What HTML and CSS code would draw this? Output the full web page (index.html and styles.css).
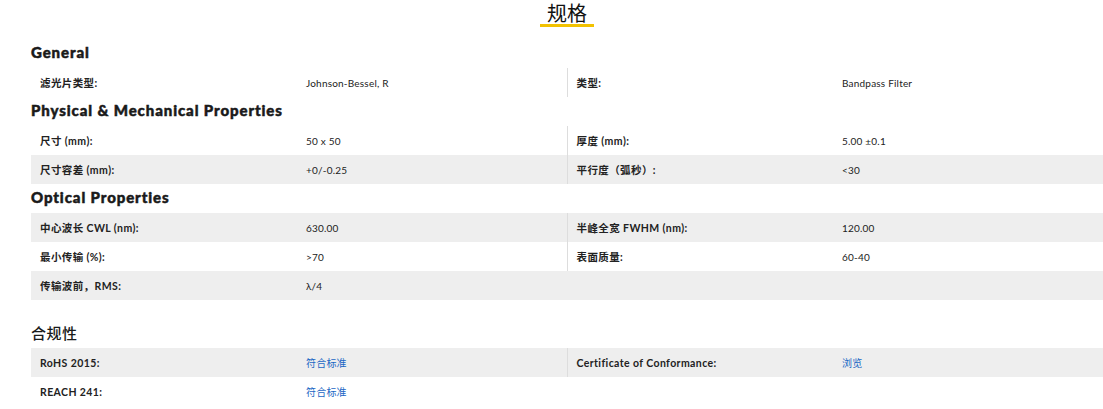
FILE: index.html
```html
<!DOCTYPE html>
<html lang="zh">
<head>
<meta charset="utf-8">
<title>规格</title>
<link rel="stylesheet" href="styles.css">
</head>
<body>
<div class="specs">
  <div class="title-wrap"><h2 class="title">规格</h2></div>

  <h3 class="group first">General</h3>
  <table class="grid">
    <colgroup><col class="c-lbl"><col class="c-val"><col class="c-lbl"><col class="c-val"></colgroup>
    <tr class="odd"><td class="lbl">滤光片类型:</td><td class="val">Johnson-Bessel, R</td><td class="lbl sep">类型:</td><td class="val">Bandpass Filter</td></tr>
  </table>

  <h3 class="group">Physical &amp; Mechanical Properties</h3>
  <table class="grid">
    <colgroup><col class="c-lbl"><col class="c-val"><col class="c-lbl"><col class="c-val"></colgroup>
    <tr class="odd"><td class="lbl">尺寸 (mm):</td><td class="val">50 x 50</td><td class="lbl sep">厚度 (mm):</td><td class="val">5.00 ±0.1</td></tr>
    <tr class="even"><td class="lbl">尺寸容差 (mm):</td><td class="val">+0/-0.25</td><td class="lbl sep">平行度（弧秒）:</td><td class="val">&lt;30</td></tr>
  </table>

  <h3 class="group">Optical Properties</h3>
  <table class="grid">
    <colgroup><col class="c-lbl"><col class="c-val"><col class="c-lbl"><col class="c-val"></colgroup>
    <tr class="even"><td class="lbl">中心波长 CWL (nm):</td><td class="val">630.00</td><td class="lbl sep">半峰全宽 FWHM (nm):</td><td class="val">120.00</td></tr>
    <tr class="odd"><td class="lbl">最小传输 (%):</td><td class="val">&gt;70</td><td class="lbl sep">表面质量:</td><td class="val">60-40</td></tr>
    <tr class="even"><td class="lbl">传输波前，RMS:</td><td class="val">λ/4</td><td></td><td></td></tr>
  </table>

  <h3 class="group cjk">合规性</h3>
  <table class="grid">
    <colgroup><col class="c-lbl"><col class="c-val"><col class="c-lbl"><col class="c-val"></colgroup>
    <tr class="even"><td class="lbl">RoHS 2015:</td><td class="val"><a class="link" href="#">符合标准</a></td><td class="lbl sep">Certificate of Conformance:</td><td class="val"><a class="link" href="#">浏览</a></td></tr>
    <tr class="odd"><td class="lbl">REACH 241:</td><td class="val"><a class="link" href="#">符合标准</a></td><td></td><td></td></tr>
  </table>
</div>
</body>
</html>
```

FILE: styles.css
```css
html, body {
  margin: 0;
  padding: 0;
  background: #ffffff;
}
body {
  font-family: "Lato", "Noto Sans CJK SC", sans-serif;
  color: #222222;
  overflow: hidden;
}
.specs {
  margin-left: 31px;
  width: 1072px;
}
.title-wrap {
  display: flex;
  justify-content: center;
  padding-top: 1px;
}
.title {
  margin: 0;
  font-family: "Noto Sans CJK SC", sans-serif;
  font-weight: 400;
  font-size: 20px;
  line-height: 23px;
  height: 23px;
  color: #111111;
  border-bottom: 3px solid #f2c200;
  padding: 0 7px;
}
.group {
  margin: 0;
  height: 29px;
  box-sizing: border-box;
  padding-top: 1px;
  line-height: 24px;
  font-size: 15px;
  font-weight: 900;
  color: #1a1a1a;
  letter-spacing: 0.9px;
  -webkit-text-stroke: 0.5px #1a1a1a;
}
.group.first {
  height: 41px;
  padding-top: 13px;
}
.group.cjk {
  margin-top: 19px;
  padding-top: 2px;
  font-family: "Noto Sans CJK SC", sans-serif;
  font-weight: 500;
  font-size: 15px;
  letter-spacing: 0.5px;
  -webkit-text-stroke: 0;
}
.grid {
  width: 1072px;
  border-collapse: collapse;
  table-layout: fixed;
}
.c-lbl {
  width: 266px;
}
.c-val {
  width: 270px;
}
.grid td {
  height: 29px;
  padding: 0 0 0 9px;
  font-size: 10px;
  line-height: 12px;
  vertical-align: middle;
  white-space: nowrap;
}
.grid tr.even td {
  background: #eeeeee;
}
.lbl {
  font-weight: 700;
  letter-spacing: 0.4px;
  color: #222222;
}
.grid td.lbl {
  font-size: 10.5px;
}
.val {
  font-weight: 400;
  color: #222222;
  letter-spacing: 0.2px;
}
.sep {
  border-left: 1px solid #dddddd;
}
.link {
  color: #1a66c4;
  text-decoration: none;
  font-family: "Noto Sans CJK SC", sans-serif;
}
```
